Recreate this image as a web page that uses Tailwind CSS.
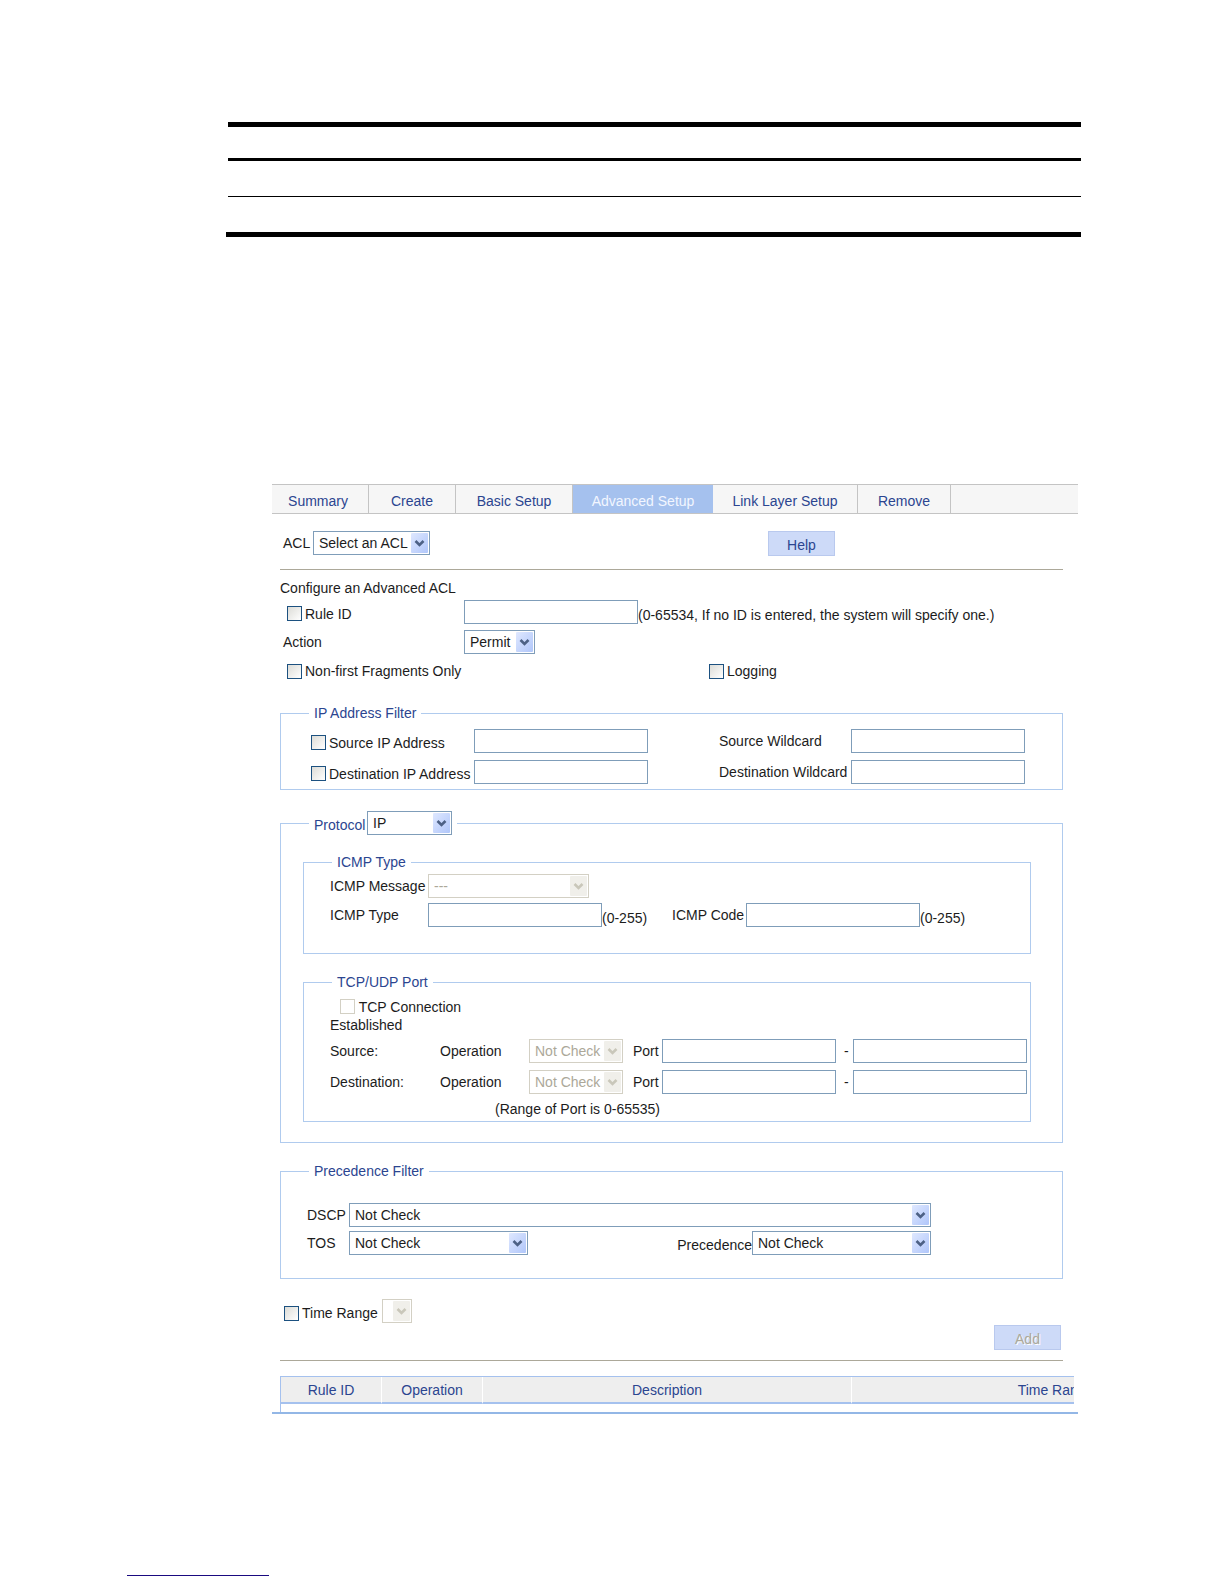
<!DOCTYPE html>
<html lang="en">
<head>
    <meta charset="UTF-8">
    <meta name="viewport" content="width=device-width, initial-scale=1.0">
    <title>Advanced Setup</title>
    <script src="https://cdn.jsdelivr.net/npm/@tailwindcss/browser@4"></script>
</head>
<body class="bg-white font-['Liberation_Sans',Arial,sans-serif] text-[14px] leading-[18px] text-[#1c1c1c]">

    <!-- Drop-down arrows -->
    <svg class="absolute size-0" aria-hidden="true">
        <defs>
            <linearGradient id="blue" x1="0" y1="0" x2="1" y2="1">
                <stop offset="0" stop-color="#dfe8ff" />
                <stop offset="1" stop-color="#b0c6fa" />
            </linearGradient>
        </defs>
        <symbol id="arrow" viewBox="0 0 17 20">
            <rect width="17" height="20" rx="1" fill="url(#blue)" />
            <path d="M4.5 8l4 4 4-4" fill="none" stroke="#4d6185" stroke-width="2.6" />
        </symbol>
        <symbol id="arrow-off" viewBox="0 0 17 20">
            <rect width="17" height="20" rx="1" fill="#f0efea" />
            <path d="M4.5 8l4 4 4-4" fill="none" stroke="#c9c7ba" stroke-width="2.6" />
        </symbol>
    </svg>

    <!-- Document table rules -->
    <div class="pt-[122px] ml-[226px] mr-[143px]">
        <div class="ml-[2px] h-[39px] border-t-5 border-b-3 border-black"></div>
        <div class="ml-[2px] h-[36px] border-b border-black"></div>
        <div class="h-[40px] border-b-5 border-black"></div>
    </div>

    <main class="mt-[247px] ml-[272px] mr-[146px] border-b-2 border-[#93b7e6]">
        <!-- Tabs -->
        <nav class="flex h-[30px] border-y border-[#c4c4c4] bg-[#f6f6f6] leading-[32px] text-center text-[#2b4590]">
            <a href="#" class="w-[97px] pr-1 border-r border-[#c4c4c4]">Summary</a>
            <a href="#" class="w-[87px] border-r border-[#c4c4c4]">Create</a>
            <a href="#" class="w-[117px] border-r border-[#c4c4c4]">Basic Setup</a>
            <a href="#" class="w-[140px] bg-[#a5c1ee] text-[#f2f6ff]">Advanced Setup</a>
            <a href="#" class="w-[145px] border-r border-[#c4c4c4]">Link Layer Setup</a>
            <a href="#" class="w-[93px] border-r border-[#c4c4c4]">Remove</a>
        </nav>

        <form class="pl-2 pr-[15px]">
            <div class="mt-[17px] flex h-[25px] items-start">
                <label for="acl" class="w-[33px] pl-[3px] leading-6">ACL</label>
                <span class="relative w-[117px]">
                    <select id="acl" class="block h-6 w-full appearance-none border border-[#7f9db9] bg-white pl-[5px]"><option>Select an ACL</option></select>
                    <svg class="pointer-events-none absolute top-[2px] right-[2px] h-5 w-[17px]"><use href="#arrow" /></svg>
                </span>
                <button type="button" class="ml-[338px] h-[25px] w-[67px] border border-[#b9c9ee] bg-[#cddaf8] pt-[2px] text-[#2b4590]">Help</button>
            </div>
            <hr class="mt-[13px] border-[#aca899]">

            <h1 class="mt-2 leading-5">Configure an Advanced ACL</h1>
            <div class="mt-[2px] flex h-6 items-center">
                <label class="flex w-[184px] items-center gap-[3px] pt-[3px] pl-[7px]">
                    <input type="checkbox" class="size-[15px] appearance-none border border-[#1c5180] bg-linear-to-br from-[#dcdcd7] to-white"> Rule ID
                </label>
                <input type="text" aria-label="Rule ID value" class="h-6 w-[174px] border border-[#7f9db9] bg-white">
                <span class="pt-[6px]">(0-65534, If no ID is entered, the system will specify one.)</span>
            </div>
            <div class="mt-[6px] flex h-6 items-center">
                <label for="action" class="w-[184px] pl-[3px]">Action</label>
                <span class="relative w-[71px]">
                    <select id="action" class="block h-6 w-full appearance-none border border-[#7f9db9] bg-white pl-[5px]"><option>Permit</option></select>
                    <svg class="pointer-events-none absolute top-[2px] right-[2px] h-5 w-[17px]"><use href="#arrow" /></svg>
                </span>
            </div>
            <div class="mt-[5px] flex h-6 items-center">
                <label class="flex w-[422px] items-center gap-[3px] pl-[7px]">
                    <input type="checkbox" class="size-[15px] appearance-none border border-[#1c5180] bg-linear-to-br from-[#dcdcd7] to-white"> Non-first Fragments Only
                </label>
                <label class="flex items-center gap-[3px] pl-[7px]">
                    <input type="checkbox" class="size-[15px] appearance-none border border-[#1c5180] bg-linear-to-br from-[#dcdcd7] to-white"> Logging
                </label>
            </div>

            <!-- IP Address Filter -->
            <fieldset class="mt-[22px] border border-[#b0cbee] pb-[5px]">
                <legend class="ml-7 px-[5px] leading-4 text-[#2b4590]">IP Address Filter</legend>
                <div class="mt-2 grid grid-cols-[163px_245px_132px_173px] items-center gap-y-[7px] pl-[30px]">
                    <label class="flex items-center gap-[3px] pt-[3px] whitespace-nowrap">
                        <input type="checkbox" class="size-[15px] appearance-none border border-[#1c5180] bg-linear-to-br from-[#dcdcd7] to-white"> Source IP Address
                    </label>
                    <input type="text" aria-label="Source IP Address" class="h-6 w-[174px] border border-[#7f9db9] bg-white">
                    <label for="src-wild">Source Wildcard</label>
                    <input type="text" id="src-wild" class="h-6 w-[174px] border border-[#7f9db9] bg-white">
                    <label class="flex items-center gap-[3px] pt-[3px] whitespace-nowrap">
                        <input type="checkbox" class="size-[15px] appearance-none border border-[#1c5180] bg-linear-to-br from-[#dcdcd7] to-white"> Destination IP Address
                    </label>
                    <input type="text" aria-label="Destination IP Address" class="h-6 w-[174px] border border-[#7f9db9] bg-white">
                    <label for="dst-wild" class="whitespace-nowrap">Destination Wildcard</label>
                    <input type="text" id="dst-wild" class="h-6 w-[174px] border border-[#7f9db9] bg-white">
                </div>
            </fieldset>

            <!-- Protocol -->
            <fieldset class="mt-[21px] border border-[#b0cbee] pr-[31px] pb-5 pl-[22px]">
                <legend class="ml-[6px] flex h-6 px-[5px] text-[#2b4590]">
                    <label for="protocol" class="w-[53px] pt-[5px]">Protocol</label>
                    <span class="relative w-[85px]">
                        <select id="protocol" class="block h-6 w-full appearance-none border border-[#7f9db9] bg-white pl-[5px] text-[#1c1c1c]"><option>IP</option></select>
                        <svg class="pointer-events-none absolute top-[2px] right-[2px] h-5 w-[17px]"><use href="#arrow" /></svg>
                    </span>
                </legend>

                <fieldset class="mt-[19px] border border-[#b0cbee] pb-[26px] pl-[26px]">
                    <legend class="ml-[2px] px-[5px] leading-4 text-[#2b4590]">ICMP Type</legend>
                    <div class="mt-1 flex h-6 items-center">
                        <label for="icmp-msg" class="w-[98px] whitespace-nowrap">ICMP Message</label>
                        <span class="relative w-[161px]">
                            <select id="icmp-msg" disabled class="block h-6 w-full appearance-none border border-[#d3d0c4] bg-white pl-[5px] text-[#aca899] opacity-100"><option>---</option></select>
                            <svg class="pointer-events-none absolute top-[2px] right-[2px] h-5 w-[17px]"><use href="#arrow-off" /></svg>
                        </span>
                    </div>
                    <div class="mt-[5px] flex h-6 items-center">
                        <label for="icmp-type" class="w-[98px]">ICMP Type</label>
                        <input type="text" id="icmp-type" class="h-6 w-[174px] border border-[#7f9db9] bg-white">
                        <span class="w-[70px] pt-[6px]">(0-255)</span>
                        <label for="icmp-code" class="w-[74px]">ICMP Code</label>
                        <input type="text" id="icmp-code" class="h-6 w-[174px] border border-[#7f9db9] bg-white">
                        <span class="pt-[6px]">(0-255)</span>
                    </div>
                </fieldset>

                <fieldset class="mt-5 border border-[#b0cbee] pb-[3px] pl-[26px]">
                    <legend class="ml-[2px] px-[5px] leading-4 text-[#2b4590]">TCP/UDP Port</legend>
                    <label class="mt-2 block w-[170px]">
                        <input type="checkbox" disabled class="ml-[10px] size-[15px] appearance-none border border-[#d3d0c4] bg-white align-[-2px]">
                        TCP Connection Established
                    </label>
                    <div class="mt-[5px] grid grid-cols-[110px_89px_104px_29px_174px_17px_174px] items-center gap-y-[7px]">
                        <span>Source:</span>
                        <label for="src-op">Operation</label>
                        <span class="relative w-[94px]">
                            <select id="src-op" disabled class="block h-6 w-full appearance-none border border-[#d3d0c4] bg-white pl-[5px] text-[#aca899] opacity-100"><option>Not Check</option></select>
                            <svg class="pointer-events-none absolute top-[2px] right-[2px] h-5 w-[17px]"><use href="#arrow-off" /></svg>
                        </span>
                        <label for="src-port">Port</label>
                        <input type="text" id="src-port" class="h-6 w-[174px] border border-[#7f9db9] bg-white">
                        <span class="pl-2">-</span>
                        <input type="text" aria-label="Source port end" class="h-6 w-[174px] border border-[#7f9db9] bg-white">
                        <span>Destination:</span>
                        <label for="dst-op">Operation</label>
                        <span class="relative w-[94px]">
                            <select id="dst-op" disabled class="block h-6 w-full appearance-none border border-[#d3d0c4] bg-white pl-[5px] text-[#aca899] opacity-100"><option>Not Check</option></select>
                            <svg class="pointer-events-none absolute top-[2px] right-[2px] h-5 w-[17px]"><use href="#arrow-off" /></svg>
                        </span>
                        <label for="dst-port">Port</label>
                        <input type="text" id="dst-port" class="h-6 w-[174px] border border-[#7f9db9] bg-white">
                        <span class="pl-2">-</span>
                        <input type="text" aria-label="Destination port end" class="h-6 w-[174px] border border-[#7f9db9] bg-white">
                    </div>
                    <p class="mt-[6px] pl-[165px]">(Range of Port is 0-65535)</p>
                </fieldset>
            </fieldset>

            <!-- Precedence Filter -->
            <fieldset class="mt-5 border border-[#b0cbee] pb-[23px] pl-[26px]">
                <legend class="ml-[2px] px-[5px] leading-4 text-[#2b4590]">Precedence Filter</legend>
                <div class="mt-6 flex h-6 items-center">
                    <label for="dscp" class="w-[42px]">DSCP</label>
                    <span class="relative w-[582px]">
                        <select id="dscp" class="block h-6 w-full appearance-none border border-[#7f9db9] bg-white pl-[5px]"><option>Not Check</option></select>
                        <svg class="pointer-events-none absolute top-[2px] right-[2px] h-5 w-[17px]"><use href="#arrow" /></svg>
                    </span>
                </div>
                <div class="mt-1 flex h-6 items-center">
                    <label for="tos" class="w-[42px]">TOS</label>
                    <span class="relative w-[179px]">
                        <select id="tos" class="block h-6 w-full appearance-none border border-[#7f9db9] bg-white pl-[5px]"><option>Not Check</option></select>
                        <svg class="pointer-events-none absolute top-[2px] right-[2px] h-5 w-[17px]"><use href="#arrow" /></svg>
                    </span>
                    <label for="prec" class="w-[224px] pt-1 text-right">Precedence</label>
                    <span class="relative w-[179px]">
                        <select id="prec" class="block h-6 w-full appearance-none border border-[#7f9db9] bg-white pl-[5px]"><option>Not Check</option></select>
                        <svg class="pointer-events-none absolute top-[2px] right-[2px] h-5 w-[17px]"><use href="#arrow" /></svg>
                    </span>
                </div>
            </fieldset>

            <div class="mt-5 flex h-6 items-center">
                <label class="flex w-[102px] items-center gap-[3px] pt-1 pl-1 whitespace-nowrap">
                    <input type="checkbox" class="size-[15px] appearance-none border border-[#1c5180] bg-linear-to-br from-[#dcdcd7] to-white"> Time Range
                </label>
                <span class="relative w-[30px]">
                    <select aria-label="Time Range" disabled class="block h-6 w-full appearance-none border border-[#d3d0c4] bg-white opacity-100"></select>
                    <svg class="pointer-events-none absolute top-[2px] right-[2px] h-5 w-[17px]"><use href="#arrow-off" /></svg>
                </span>
            </div>
            <div class="mt-[2px] flex justify-end pr-[2px]">
                <button type="button" disabled class="h-[25px] w-[67px] border border-[#b9c9ee] bg-[#cddaf8] pt-[2px] text-[#aca899] text-shadow-[1px_1px_0_white]">Add</button>
            </div>
            <hr class="mt-[10px] border-[#aca899]">
        </form>

        <!-- Rule list, runs off the right side -->
        <div class="mt-[15px] mr-1 ml-2 overflow-hidden">
            <table class="w-[979px] table-fixed border-separate border-spacing-0 border-t border-l border-[#a5c1ee] text-[#2b4590]">
                <thead>
                    <tr class="h-[27px] bg-[#eeeeee]">
                        <th class="w-[101px] border-r border-b-2 border-r-white border-b-[#a5c1ee] font-normal">Rule ID</th>
                        <th class="w-[101px] border-r border-b-2 border-r-white border-b-[#a5c1ee] font-normal">Operation</th>
                        <th class="w-[369px] border-r border-b-2 border-r-white border-b-[#a5c1ee] font-normal">Description</th>
                        <th class="border-b-2 border-b-[#a5c1ee] font-normal">Time Range</th>
                    </tr>
                </thead>
                <tbody>
                    <tr class="h-2"><td colspan="4" class="p-0"></td></tr>
                </tbody>
            </table>
        </div>
    </main>

    <footer class="mt-[161px] ml-[127px] w-[142px] border-t border-[#1a0a80] pb-2"></footer>
</body>
</html>
